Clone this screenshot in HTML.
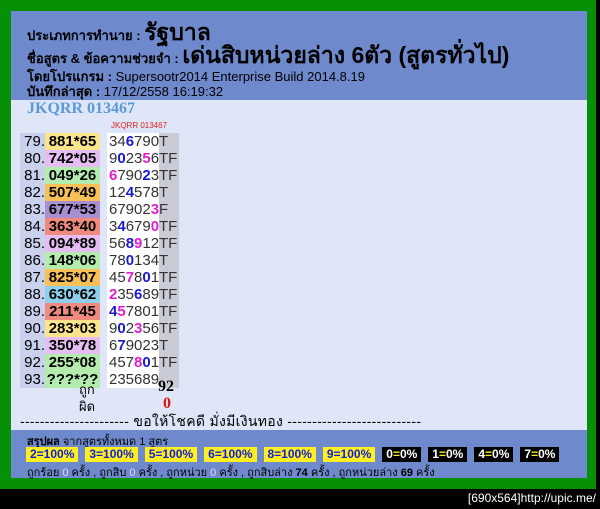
<!DOCTYPE html>
<html><head><meta charset="utf-8"><style>
body{margin:0;width:600px;height:509px;background:#000;position:relative;overflow:hidden;font-family:"Liberation Sans","Noto Sans CJK SC",sans-serif}
.g{position:absolute;left:0;top:0;width:596px;height:489px;background:#069006}
.p{position:absolute;left:11px;top:11px;width:576px;height:467px;background:#dfe6f7}
.h{position:absolute;left:0;top:0;width:576px;height:89px;background:#6e89cc;color:#000}
.f{position:absolute;left:0;top:419px;width:576px;height:48px;background:#6e89cc;font-size:11px}
.t{position:absolute;white-space:nowrap}
.row{position:absolute;left:9px;height:17px;font-size:15px;line-height:17px;font-family:"Liberation Sans",sans-serif}
.n{position:absolute;left:0;width:25px;background:#c9d1ec;height:17px;text-align:right}
.c{position:absolute;left:25px;width:55px;height:17px;font-weight:bold;text-align:center}
.d{position:absolute;left:87px;width:50px;height:17px;background:#fff;color:#333;padding-left:2px}
.r{position:absolute;left:139px;width:20px;height:17px;background:#c9ccd6;color:#333}
b.bl{color:#1a1ad0}b.pk{color:#e020d0}
.tag{display:inline-block;padding:0 4px;margin-right:7px;font-weight:bold;font-size:12px;line-height:15px}
.y{background:#ffee22;color:#1020d0}.k{background:#000;color:#fff}.k i{color:#ee2;font-style:normal}
</style></head><body>
<div class="g"></div>
<div class="p">
<div class="h">
<div class="t" style="left:16px;top:4px;font-size:13px;font-weight:bold">ประเภทการทำนาย : <span style="font-size:23px">รัฐบาล</span></div>
<div class="t" style="left:16px;top:27px;font-size:13px;font-weight:bold">ชื่อสูตร &amp; ข้อความช่วยจำ : <span style="font-size:23px">เด่นสิบหน่วยล่าง 6ตัว (สูตรทั่วไป)</span></div>
<div class="t" style="left:16px;top:55px;font-size:13px"><b>โดยโปรแกรม :</b> Supersootr2014 Enterprise Build 2014.8.19</div>
<div class="t" style="left:16px;top:70px;font-size:13px"><b>บันทึกล่าสุด :</b> 17/12/2558 16:19:32</div>
</div>
<div class="t" style="left:16px;top:89px;font-size:16px;font-weight:bold;color:#5a9ad8;font-family:'Liberation Serif',serif">JKQRR 013467</div>
<div class="t" style="left:100px;top:110px;font-size:8px;color:#e02020">JKQRR 013467</div>
<div class="row" style="top:122px"><span class="n">79.</span><span class="c" style="background:#fbe58c">881*65</span><span class="d">34<b class="bl">6</b>790</span><span class="r">T</span></div>
<div class="row" style="top:139px"><span class="n">80.</span><span class="c" style="background:#e5bdf2">742*05</span><span class="d">9<b class="bl">0</b>23<b class="pk">5</b>6</span><span class="r">TF</span></div>
<div class="row" style="top:156px"><span class="n">81.</span><span class="c" style="background:#b4ecae">049*26</span><span class="d"><b class="pk">6</b>790<b class="bl">2</b>3</span><span class="r">TF</span></div>
<div class="row" style="top:173px"><span class="n">82.</span><span class="c" style="background:#f9c058">507*49</span><span class="d">12<b class="bl">4</b>578</span><span class="r">T</span></div>
<div class="row" style="top:190px"><span class="n">83.</span><span class="c" style="background:#a98ed0">677*53</span><span class="d">67902<b class="pk">3</b></span><span class="r">F</span></div>
<div class="row" style="top:207px"><span class="n">84.</span><span class="c" style="background:#ee8a7e">363*40</span><span class="d">3<b class="bl">4</b>679<b class="pk">0</b></span><span class="r">TF</span></div>
<div class="row" style="top:224px"><span class="n">85.</span><span class="c" style="background:#e5bdf2">094*89</span><span class="d">56<b class="bl">8</b><b class="pk">9</b>12</span><span class="r">TF</span></div>
<div class="row" style="top:241px"><span class="n">86.</span><span class="c" style="background:#b4ecae">148*06</span><span class="d">78<b class="bl">0</b>134</span><span class="r">T</span></div>
<div class="row" style="top:258px"><span class="n">87.</span><span class="c" style="background:#f9c058">825*07</span><span class="d">45<b class="pk">7</b>8<b class="bl">0</b>1</span><span class="r">TF</span></div>
<div class="row" style="top:275px"><span class="n">88.</span><span class="c" style="background:#8ed0ec">630*62</span><span class="d"><b class="pk">2</b>35<b class="bl">6</b>89</span><span class="r">TF</span></div>
<div class="row" style="top:292px"><span class="n">89.</span><span class="c" style="background:#ee8a7e">211*45</span><span class="d"><b class="bl">4</b><b class="pk">5</b>7801</span><span class="r">TF</span></div>
<div class="row" style="top:309px"><span class="n">90.</span><span class="c" style="background:#fbe58c">283*03</span><span class="d">9<b class="bl">0</b>2<b class="pk">3</b>56</span><span class="r">TF</span></div>
<div class="row" style="top:326px"><span class="n">91.</span><span class="c" style="background:#e5bdf2">350*78</span><span class="d">6<b class="bl">7</b>9023</span><span class="r">T</span></div>
<div class="row" style="top:343px"><span class="n">92.</span><span class="c" style="background:#b4ecae">255*08</span><span class="d">457<b class="pk">8</b><b class="bl">0</b>1</span><span class="r">TF</span></div>
<div class="row" style="top:360px"><span class="n">93.</span><span class="c" style="background:#b4ecae">???*??</span><span class="d">235689</span><span class="r"></span></div>
<div class="t" style="left:68px;top:368px;font-size:13px">ถูก</div>
<div class="t" style="left:68px;top:385px;font-size:13px">ผิด</div>
<div class="t" style="left:147px;top:367px;font-size:16px;font-weight:bold;font-family:'Liberation Serif',serif">92</div>
<div class="t" style="left:152px;top:384px;font-size:16px;font-weight:bold;color:#e01010;font-family:'Liberation Serif',serif">0</div>
<div class="t" style="left:9px;top:400px;font-size:14px;letter-spacing:0.3px">---------------------- ขอให้โชคดี มั่งมีเงินทอง ---------------------------</div>
<div class="f">
<div class="t" style="left:16px;top:2px"><b>สรุปผล</b> จากสูตรทั้งหมด 1 สูตร</div>
<div class="t" style="left:15px;top:17px"><span class="tag y">2=100%</span><span class="tag y">3=100%</span><span class="tag y">5=100%</span><span class="tag y">6=100%</span><span class="tag y">8=100%</span><span class="tag y">9=100%</span><span class="tag k">0<i>=</i>0%</span><span class="tag k">1<i>=</i>0%</span><span class="tag k">4<i>=</i>0%</span><span class="tag k">7<i>=</i>0%</span></div>
<div class="t" style="left:16px;top:33px">ถูกร้อย <span style="color:#dde">0</span> ครั้ง , ถูกสิบ <span style="color:#dde">0</span> ครั้ง , ถูกหน่วย <span style="color:#dde">0</span> ครั้ง , ถูกสิบล่าง <b>74</b> ครั้ง , ถูกหน่วยล่าง <b>69</b> ครั้ง</div>
</div>
</div>
<div class="t" style="right:4px;top:491px;color:#fff;font-size:12px;font-family:'Liberation Sans',sans-serif">[690x564]http://upic.me/</div>
</body></html>
